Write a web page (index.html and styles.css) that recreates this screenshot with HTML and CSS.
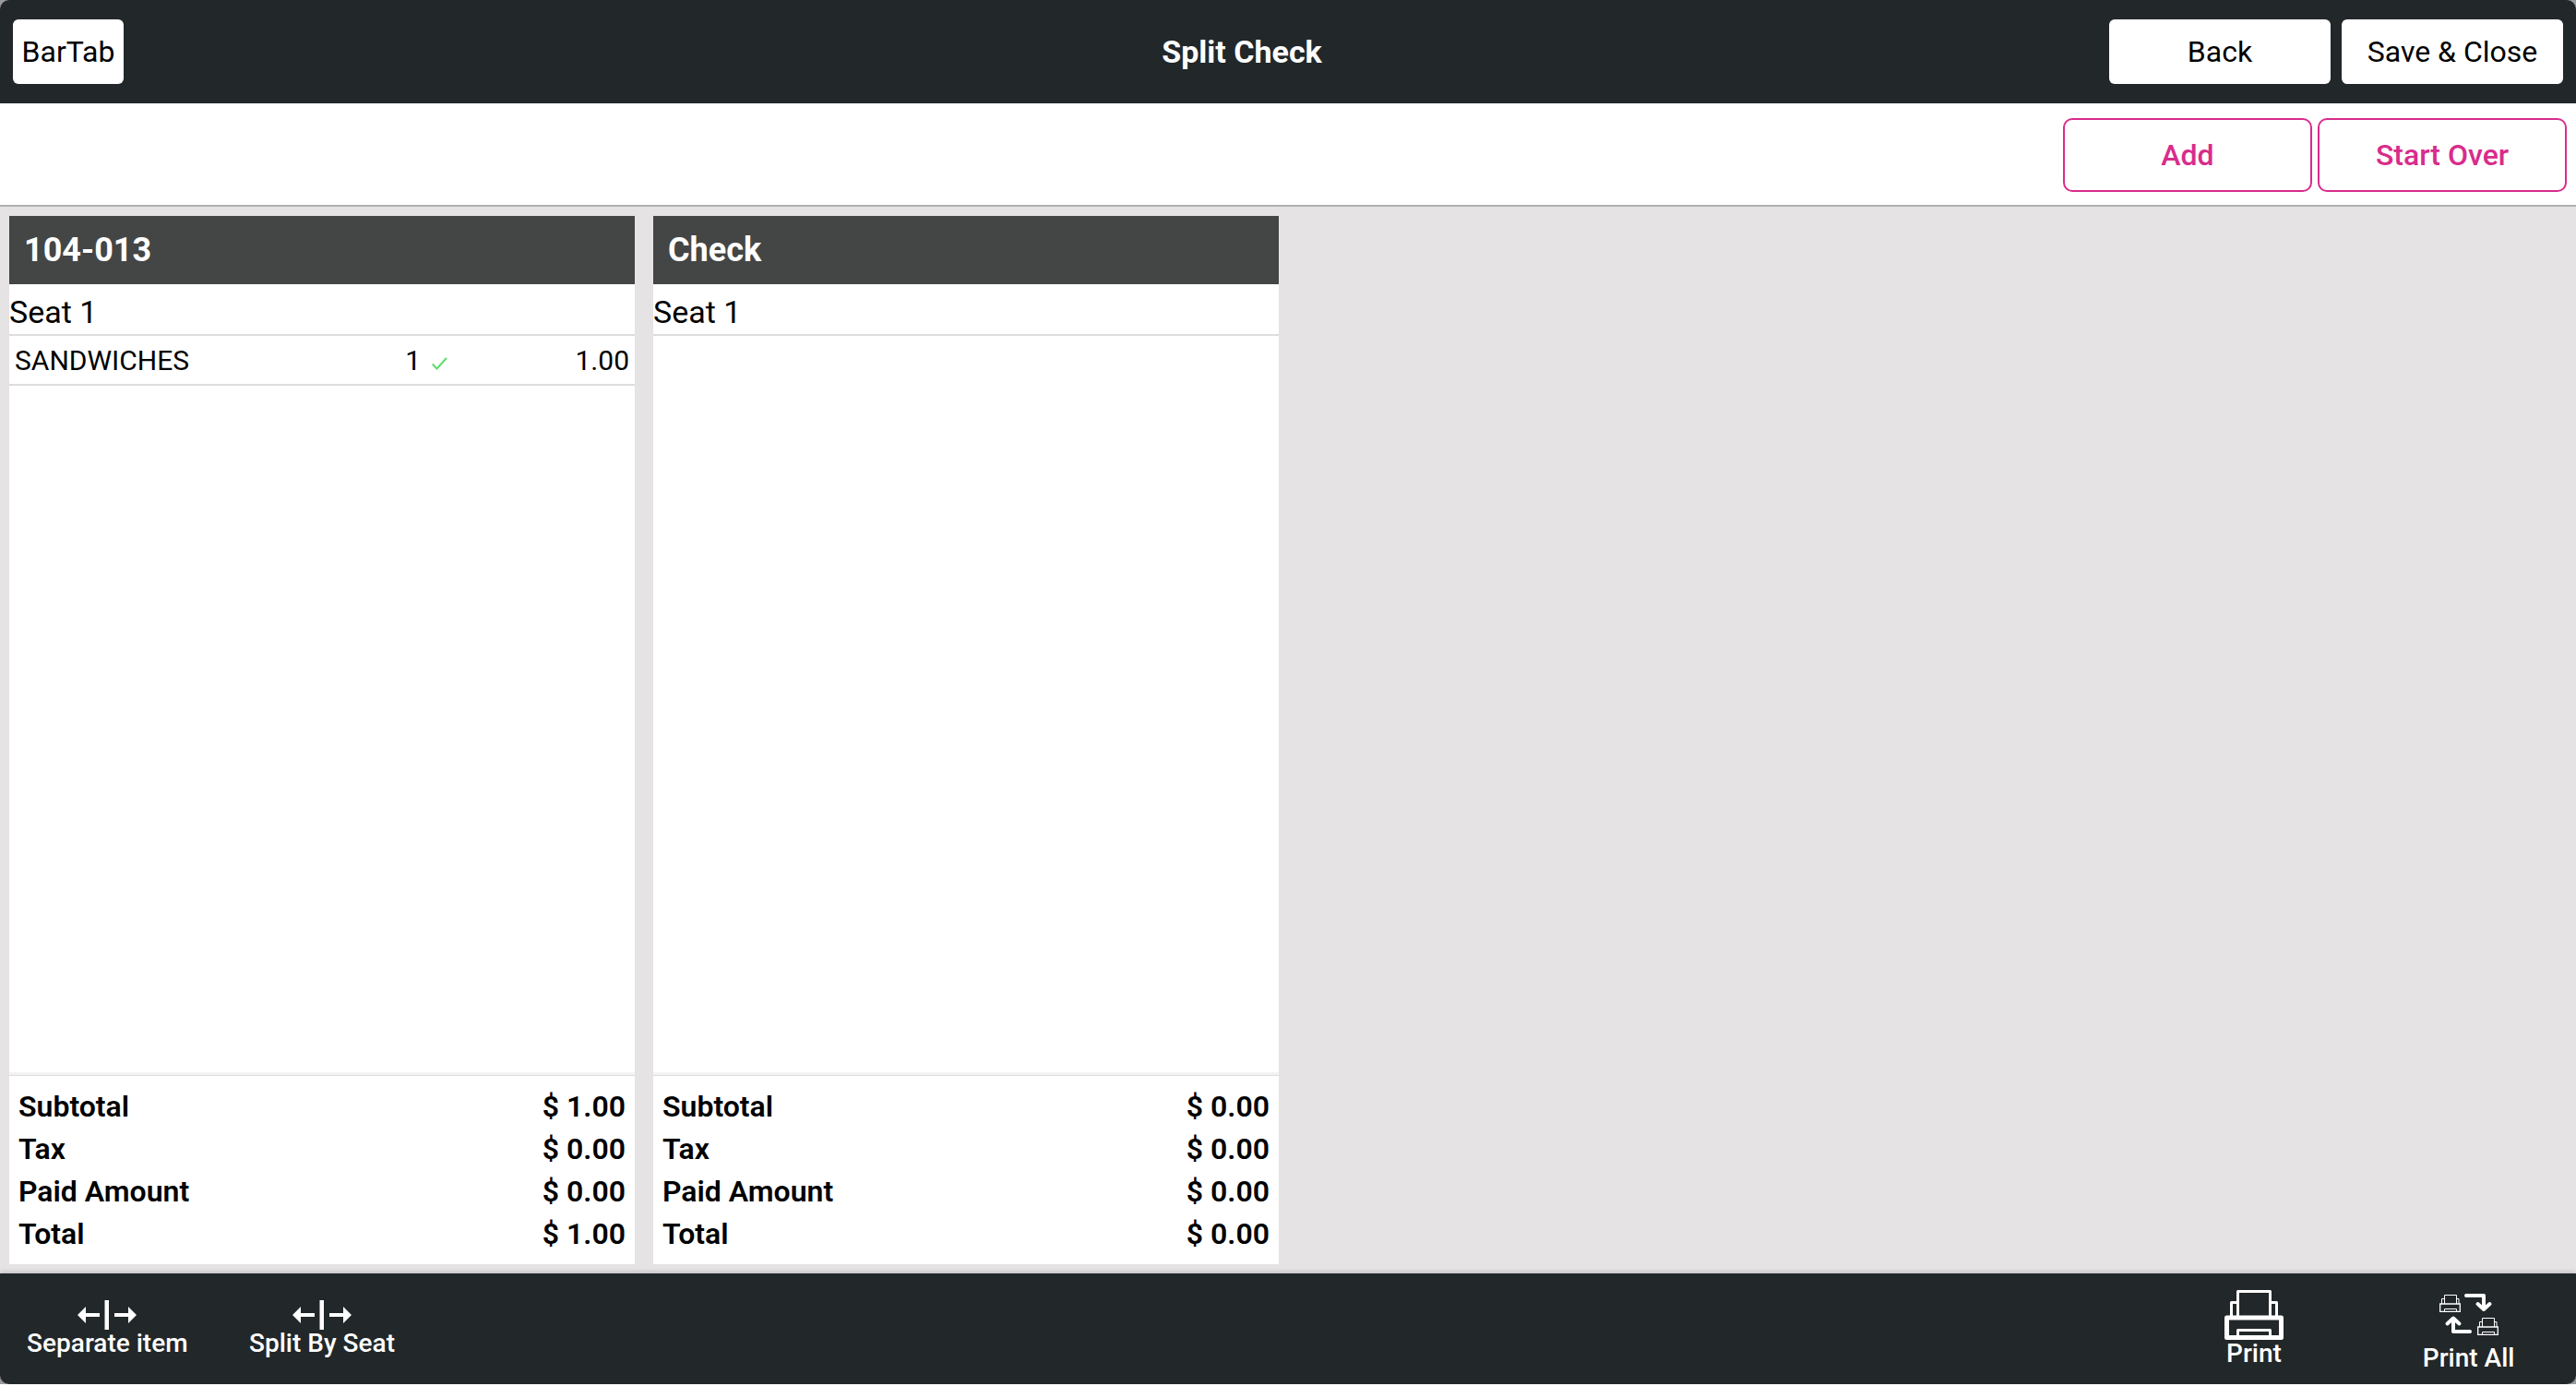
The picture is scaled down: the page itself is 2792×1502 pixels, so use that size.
FILE: index.html
```html
<!DOCTYPE html>
<html lang="en">
<head>
<meta charset="utf-8">
<title>Split Check</title>
<link rel="stylesheet" href="styles.css">
</head>
<body>
<div class="app">
  <header class="header">
    <div class="header-start"><button type="button" class="btn">BarTab</button></div>
    <h1 class="title">Split Check</h1>
    <div class="header-end">
      <button type="button" class="btn btn-wide">Back</button>
      <button type="button" class="btn btn-wide">Save &amp; Close</button>
    </div>
  </header>
  <div class="toolbar">
    <button type="button" class="btn-outline">Add</button>
    <button type="button" class="btn-outline">Start Over</button>
  </div>
  <main class="checks">
    <section class="check">
      <h2 class="check-title">104-013</h2>
      <div class="check-body">
        <h3 class="seat">Seat 1</h3>
        <div class="item">
          <span class="item-name">SANDWICHES</span>
          <span class="item-qty">1</span>
          <svg class="tick" viewBox="0 0 18 14" aria-hidden="true"><path d="M.700 7.500 5.500 12.500 16 1"/></svg>
          <span class="item-price">1.00</span>
        </div>
      </div>
      <dl class="totals">
        <div class="total"><dt>Subtotal</dt><dd>$ 1.00</dd></div>
        <div class="total"><dt>Tax</dt><dd>$ 0.00</dd></div>
        <div class="total"><dt>Paid Amount</dt><dd>$ 0.00</dd></div>
        <div class="total"><dt>Total</dt><dd>$ 1.00</dd></div>
      </dl>
    </section>
    <section class="check">
      <h2 class="check-title">Check</h2>
      <div class="check-body">
        <h3 class="seat">Seat 1</h3>
      </div>
      <dl class="totals">
        <div class="total"><dt>Subtotal</dt><dd>$ 0.00</dd></div>
        <div class="total"><dt>Tax</dt><dd>$ 0.00</dd></div>
        <div class="total"><dt>Paid Amount</dt><dd>$ 0.00</dd></div>
        <div class="total"><dt>Total</dt><dd>$ 0.00</dd></div>
      </dl>
    </section>
  </main>
  <footer class="footer">
    <button type="button" class="action">
      <svg class="icon-split" viewBox="0 0 64 32" aria-hidden="true"><path d="M0 16 9 7v7h15v4H9v7zM64 16 55 7v7H40v4h15v7zM29.500 0h4.500v32h-4.500z"/></svg>
      Separate item
    </button>
    <button type="button" class="action">
      <svg class="icon-split" viewBox="0 0 64 32" aria-hidden="true"><path d="M0 16 9 7v7h15v4H9v7zM64 16 55 7v7H40v4h15v7zM29.500 0h4.500v32h-4.500z"/></svg>
      Split By Seat
    </button>
    <button type="button" class="action action-print">
      <svg class="icon-print" viewBox="0 0 64 54" aria-hidden="true"><g fill="none" stroke="#fff" stroke-linejoin="round"><path stroke-width="3" d="M14.500 28V1.500h35V28M14 13.500H7.500V28M50 13.500h6.500V28M14.500 51v-7.500h35V51"/><path stroke-width="5" d="M2.500 30h59v21.500h-59z"/></g></svg>
      Print
    </button>
    <button type="button" class="action">
      <svg class="icon-all" viewBox="0 0 64 64" aria-hidden="true">
        <g fill="none" stroke="#fff">
          <g id="mini"><path stroke-width="1" d="M5.500 20V10.500h13V20M5 14.500H2.500V20M19 14.500h2V20M5.500 28v-2.500h13V28"/><path stroke-width="1.300" d="M.700 20h21.600v8.400H.700z"/></g>
          <use href="#mini" x="41" y="25"/>
          <g stroke-width="4" stroke-linecap="round" stroke-linejoin="round"><path d="M29 11h19v14M41.500 20l6.500 6 6.500-6M33 50H15V37M8.500 41.500l6.500-6 6.500 6"/></g>
        </g>
      </svg>
      Print All
    </button>
  </footer>
</div>
</body>
</html>
```
FILE: styles.css
```css
* { box-sizing: border-box; }

body {
  margin: 0;
  background: #fff;
  color: #000;
  font-family: Roboto, sans-serif;
  font-size: 32px;
}

button { font: inherit; cursor: pointer; }
h1, h2, h3, dl, dd { margin: 0; }

.app {
  display: flex;
  flex-direction: column;
  min-height: 100vh;
  border-bottom: 2px solid #fff;
  background: #9a9a9a;
}

.header {
  display: flex;
  align-items: center;
  height: 112px;
  padding: 0 14px;
  background: #222729;
  border-radius: 10px 10px 0 0;
}

.header-start { width: 392px; }
.header-end { display: flex; gap: 12px; }

.title {
  flex: 1;
  color: #fff;
  font-size: 34px;
  font-weight: 700;
  text-align: center;
}

.btn {
  height: 70px;
  min-width: 120px;
  padding: 0;
  border: 0;
  border-radius: 6px;
  background: #fff;
  color: #000;
}
.btn-wide { width: 240px; }

.toolbar {
  display: flex;
  justify-content: flex-end;
  gap: 6px;
  padding: 16px 10px 14px;
  border-bottom: 2px solid #b0b0b0;
  background: #fff;
}

.btn-outline {
  width: 270px;
  height: 80px;
  border: 2px solid #d82c8c;
  border-radius: 10px;
  background: #fff;
  color: #d82c8c;
  font-weight: 500;
}

.checks {
  display: grid;
  flex: 1;
  grid-template-columns: repeat(4, 1fr);
  background: #e5e3e4;
}

.check {
  display: flex;
  flex-direction: column;
  margin: 10px;
  background: #fff;
}

.check-title {
  padding: 0 16px;
  background: #444645;
  color: #fff;
  font-size: 36px;
  font-weight: 700;
  line-height: 74px;
}

.check-body { flex: 1; }

.seat {
  padding-top: 6px;
  border-bottom: 2px solid #ddd;
  font-size: 34px;
  font-weight: 400;
  line-height: 48px;
}

.item {
  display: flex;
  align-items: center;
  padding: 2px 6px 0;
  border-bottom: 2px solid #ddd;
  font-size: 30px;
  line-height: 50px;
}
.item-name { flex: 1; }
.item-price { width: 196px; text-align: right; }

.tick {
  width: 18px;
  height: 14px;
  margin: 5px 0 0 12px;
  fill: none;
  stroke: #5fdc6c;
  stroke-width: 2;
}

.totals {
  padding: 10px;
  border-top: 1px solid #ddd;
  box-shadow: 0 -3px 0 #f3f3f3;
  font-weight: 600;
  line-height: 46px;
}
.total { display: flex; justify-content: space-between; }

.footer {
  display: grid;
  grid-template-columns: repeat(12, 1fr);
  height: 120px;
  border-radius: 0 0 10px 10px;
  background: #222729;
  box-shadow: 0 -2px 4px rgba(0, 0, 0, 0.15);
}

.action {
  display: flex;
  flex-direction: column;
  align-items: center;
  justify-content: center;
  padding: 0;
  border: 0;
  background: none;
  color: #fff;
  font-size: 28px;
  font-weight: 500;
  line-height: 30px;
  white-space: nowrap;
}
.action-print { grid-column: 11; }

.icon-split { width: 64px; height: 32px; fill: #fff; }
.icon-print { width: 64px; height: 54px; }
.icon-all { width: 64px; height: 64px; }
```
